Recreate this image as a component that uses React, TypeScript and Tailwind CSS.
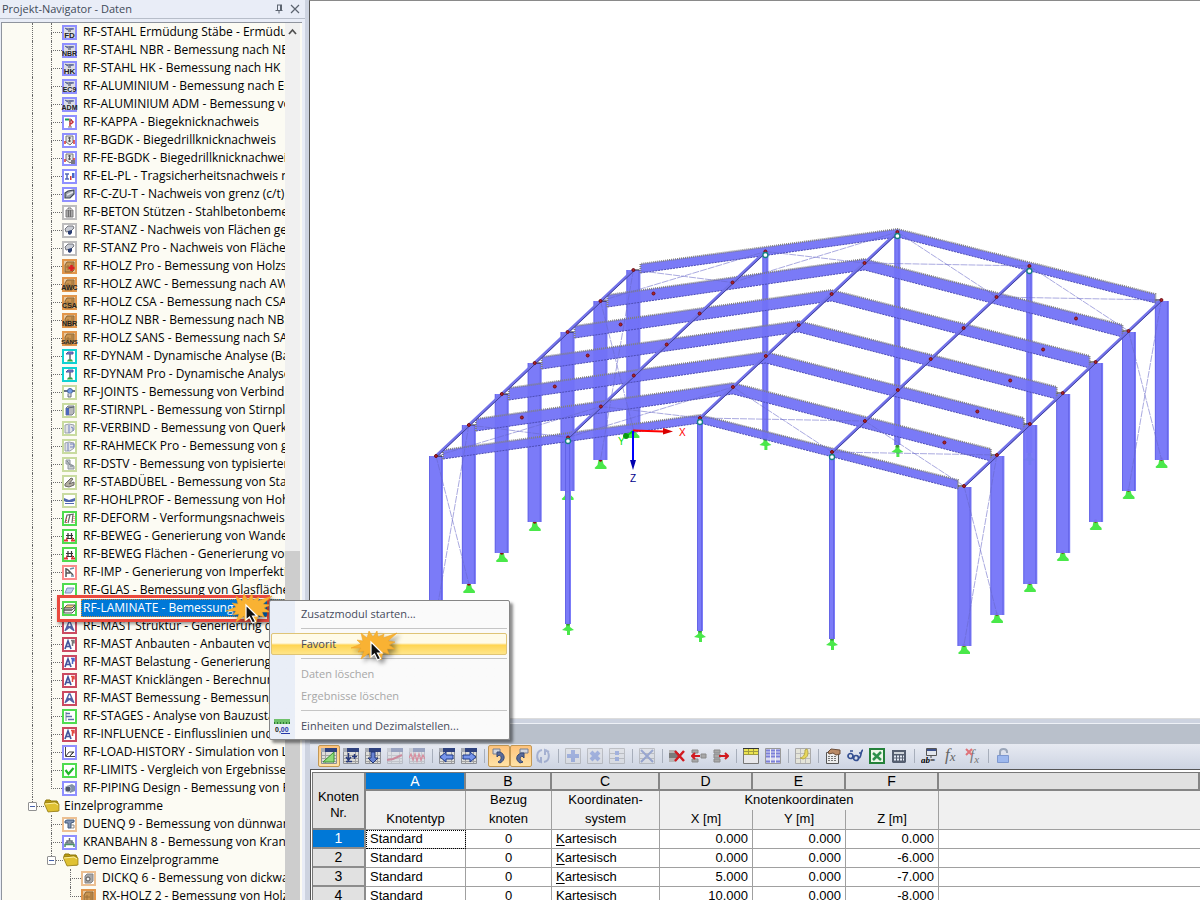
import React, { useState } from 'react';

type Kind =
    | 'label' | 'kappa' | 'bgdk' | 'elpl' | 'channel' | 'beton' | 'stanz' | 'holz' | 'holzPro' | 'dynam'
    | 'joints' | 'plate' | 'verbind' | 'rahmeck' | 'dstv' | 'dowel' | 'hohl' | 'deform' | 'beweg' | 'imp'
    | 'glas' | 'laminate' | 'mast' | 'mastExt' | 'stages' | 'history' | 'limits' | 'piping' | 'duenq' | 'kran' | 'dickq';

interface Module {
    name: string;
    frame: string;
    kind: Kind;
    tag?: string;
}

const BLUE = '#8f90ff';
const GREY = '#bdbdbd';
const WOOD = '#e2964a';
const CYAN = '#10d2d2';
const LIME = '#c9dba0';
const GREEN = '#4fdc4f';
const PINK = '#fb8b8b';
const RED = '#cb4a60';
const SAND = '#ecc092';

const modules: Module[] = [
    { name: 'RF-STAHL Ermüdung Stäbe - Ermüdungsnachweis', frame: BLUE, kind: 'label', tag: 'FD' },
    { name: 'RF-STAHL NBR - Bemessung nach NBR', frame: BLUE, kind: 'label', tag: 'NBR' },
    { name: 'RF-STAHL HK - Bemessung nach HK', frame: BLUE, kind: 'label', tag: 'HK' },
    { name: 'RF-ALUMINIUM - Bemessung nach Eurocode 9', frame: BLUE, kind: 'label', tag: 'EC9' },
    { name: 'RF-ALUMINIUM ADM - Bemessung von Aluminium', frame: BLUE, kind: 'label', tag: 'ADM' },
    { name: 'RF-KAPPA - Biegeknicknachweis', frame: BLUE, kind: 'kappa' },
    { name: 'RF-BGDK - Biegedrillknicknachweis', frame: BLUE, kind: 'bgdk' },
    { name: 'RF-FE-BGDK - Biegedrillknicknachweis', frame: BLUE, kind: 'bgdk', tag: 'Fe' },
    { name: 'RF-EL-PL - Tragsicherheitsnachweis nach EL-PL', frame: BLUE, kind: 'elpl' },
    { name: 'RF-C-ZU-T - Nachweis von grenz (c/t)', frame: BLUE, kind: 'channel' },
    { name: 'RF-BETON Stützen - Stahlbetonbemessung', frame: GREY, kind: 'beton' },
    { name: 'RF-STANZ - Nachweis von Flächen gegen Durchstanzen', frame: GREY, kind: 'stanz' },
    { name: 'RF-STANZ Pro - Nachweis von Flächen', frame: GREY, kind: 'stanz' },
    { name: 'RF-HOLZ Pro - Bemessung von Holzstäben', frame: WOOD, kind: 'holzPro' },
    { name: 'RF-HOLZ AWC - Bemessung nach AWC', frame: WOOD, kind: 'holz', tag: 'AWC' },
    { name: 'RF-HOLZ CSA - Bemessung nach CSA', frame: WOOD, kind: 'holz', tag: 'CSA' },
    { name: 'RF-HOLZ NBR - Bemessung nach NBR', frame: WOOD, kind: 'holz', tag: 'NBR' },
    { name: 'RF-HOLZ SANS - Bemessung nach SANS', frame: WOOD, kind: 'holz', tag: 'SANS' },
    { name: 'RF-DYNAM - Dynamische Analyse (Basis)', frame: CYAN, kind: 'dynam' },
    { name: 'RF-DYNAM Pro - Dynamische Analyse', frame: CYAN, kind: 'dynam' },
    { name: 'RF-JOINTS - Bemessung von Verbindungen', frame: LIME, kind: 'joints' },
    { name: 'RF-STIRNPL - Bemessung von Stirnplatten', frame: LIME, kind: 'plate' },
    { name: 'RF-VERBIND - Bemessung von Querkraft', frame: LIME, kind: 'verbind' },
    { name: 'RF-RAHMECK Pro - Bemessung von geschraubten', frame: LIME, kind: 'rahmeck' },
    { name: 'RF-DSTV - Bemessung von typisierten Verbindungen', frame: LIME, kind: 'dstv' },
    { name: 'RF-STABDÜBEL - Bemessung von Stabdübeln', frame: LIME, kind: 'dowel' },
    { name: 'RF-HOHLPROF - Bemessung von Hohlprofilen', frame: LIME, kind: 'hohl' },
    { name: 'RF-DEFORM - Verformungsnachweis von Stäben', frame: GREEN, kind: 'deform' },
    { name: 'RF-BEWEG - Generierung von Wanderlasten', frame: GREEN, kind: 'beweg' },
    { name: 'RF-BEWEG Flächen - Generierung von Lasten', frame: GREEN, kind: 'beweg' },
    { name: 'RF-IMP - Generierung von Imperfektionen', frame: PINK, kind: 'imp' },
    { name: 'RF-GLAS - Bemessung von Glasflächen', frame: GREEN, kind: 'glas' },
    { name: 'RF-LAMINATE - Bemessung von Laminat', frame: GREEN, kind: 'laminate' },
    { name: 'RF-MAST Struktur - Generierung der Struktur', frame: RED, kind: 'mast' },
    { name: 'RF-MAST Anbauten - Anbauten von Masten', frame: RED, kind: 'mastExt' },
    { name: 'RF-MAST Belastung - Generierung der Last', frame: RED, kind: 'mastExt', tag: 'b' },
    { name: 'RF-MAST Knicklängen - Berechnung', frame: RED, kind: 'mastExt', tag: 'r' },
    { name: 'RF-MAST Bemessung - Bemessung', frame: RED, kind: 'mast' },
    { name: 'RF-STAGES - Analyse von Bauzuständen', frame: GREEN, kind: 'stages' },
    { name: 'RF-INFLUENCE - Einflusslinien und -flächen', frame: RED, kind: 'mastExt', tag: 'r' },
    { name: 'RF-LOAD-HISTORY - Simulation von Lasten', frame: BLUE, kind: 'history' },
    { name: 'RF-LIMITS - Vergleich von Ergebnissen', frame: GREEN, kind: 'limits' },
    { name: 'RF-PIPING Design - Bemessung von Rohren', frame: BLUE, kind: 'piping' },
];

const programs: Module[] = [
    { name: 'DUENQ 9 - Bemessung von dünnwandigen', frame: SAND, kind: 'duenq' },
    { name: 'KRANBAHN 8 - Bemessung von Kranbahnen', frame: BLUE, kind: 'kran' },
];

const demoPrograms: Module[] = [
    { name: 'DICKQ 6 - Bemessung von dickwandigen', frame: SAND, kind: 'dickq' },
    { name: 'RX-HOLZ 2 - Bemessung von Holz', frame: WOOD, kind: 'holz' },
];

const Glyph: React.FC<{ kind: Kind; tag?: string }> = ({ kind, tag }) => {
    switch (kind) {
        case 'label':
            return <g><path d="M2 2h11v11H2z" fill="#dcdde4" /><path d="M3 3h9l-2 2H5zM6 5h3v2H6z" fill="#8a8d98" /><path d="M3 3l3 2M7 4h5" stroke="#4a5aa8" /></g>;
        case 'kappa':
            return <g><path d="M3 4.500h4" stroke="#179b54" strokeWidth="2" /><path d="M8 3.500v8M9 5l2 2-2 2" stroke="#c42d35" strokeWidth="1.500" fill="none" /><path d="M6 12h4M7 7l3-3" stroke="#747474" fill="none" /></g>;
        case 'bgdk':
            return <g><path d="M4 3h7v6l-3 3-4-3z" fill="#e4e4e4" stroke="#777" /><path d="M6 5h3M7.500 4v5M6 8h3" stroke="#555" /><path d="M3 8v3M12 7v4" stroke="#d93030" strokeWidth="1.500" />{tag && <path d="M9 9h4v4H9z" fill="#77777f" />}</g>;
        case 'elpl':
            return <g><path d="M3 5h4M5 5v5M3 10h4" stroke="#5368b9" strokeWidth="1.500" /><path d="M10 4h2.500v5H10z" fill="#4866c9" /><path d="M8 7h1.500v4H8z" fill="#d43c3c" /></g>;
        case 'channel':
            return <g><path d="M3 6l3-2 6-1v4l-4 4-5 0z" fill="#9aa0ac" stroke="#3f4757" strokeWidth="1.200" /><path d="M5 8l6-3" stroke="#e4e6ea" strokeWidth="1.500" /></g>;
        case 'beton':
            return <g><path d="M4 5h7v7H4z" fill="#a9a9a9" stroke="#7c7c7c" /><path d="M6 4V3h3v1M6.500 5v7M8.500 5v7" stroke="#6d6d6d" fill="none" /></g>;
        case 'stanz':
            return <g><path d="M3 6l3-3h5l1 2-3 3-5 1z" fill="#c8ccd4" stroke="#75777d" /><path d="M6 8l4-1v3l-2 2-2-1z" fill="#2b3f72" /></g>;
        case 'holz':
        case 'holzPro':
            return <g><path d="M2 2h11v11H2z" fill="#e8c79c" /><path d="M3 6l2-3h7v8l-2 2H3z" fill="#c99450" stroke="#8d6430" /><path d="M4 8h5M6 6v5M10 4v7" stroke="#9c7038" fill="none" />{kind === 'holzPro' && <path d="M9.500 6v6M6.500 9h6" stroke="#dd1e24" strokeWidth="2.500" />}</g>;
        case 'dynam':
            return <g><path d="M4 5l2-2h5v2H7z" fill="#7c82d1" stroke="#4f559a" /><path d="M8 5v6" stroke="#667" strokeWidth="1.500" /><path d="M5 12.500h6l-1-2H6z" fill="#37a340" /></g>;
        case 'joints':
            return <g><path d="M2 6h11" stroke="#687386" strokeWidth="2" /><circle cx="8" cy="6" r="2.500" fill="#74a0e9" stroke="#46659d" /><path d="M6 8.500v3.500h3V8.500" fill="#ddd" stroke="#67717d" /></g>;
        case 'plate':
            return <g><path d="M4 5l2-2h6v7l-2 2H4z" fill="#b8b9bc" stroke="#777e87" /><path d="M4 5h3v7H4z" fill="#4c68bd" /><path d="M6 5l6-1" stroke="#5b6470" /></g>;
        case 'verbind':
        case 'rahmeck':
            return <g><path d="M3 4l4-1 5 1v5l-4 3H3z" fill="#e0e2e5" stroke="#9aa1a8" /><path d={kind === 'verbind' ? 'M7 4v8M9 6l2 1v3' : 'M6 4v8M8 5h4v3H8'} stroke="#7582c0" fill="none" /></g>;
        case 'dstv':
            return <g><path d="M4 3h4v4l4 2v3H6V7H4z" fill="#c9ced2" stroke="#8e959c" /><path d="M5 4l3 4M8 9h3" stroke="#6f7882" /></g>;
        case 'dowel':
            return <g><path d="M3 9l6-6 2 1-4 5 5-2v3l-5 2-4-1z" fill="#b2aea0" stroke="#696865" /></g>;
        case 'hohl':
            return <g><path d="M2 5l5 2 6-2v3l-3 1H4L2 8z" fill="#5068b0" /><path d="M3 10.500h9" stroke="#5068b0" /></g>;
        case 'deform':
            return <g><path d="M3 12l2-8h3l-2 8M5 4l7-1M11 3l-1 9" stroke="#666" strokeWidth="1.200" fill="none" /><path d="M4.500 12V6M12 5v7" stroke="#f04b4b" strokeDasharray="1 1" fill="none" /></g>;
        case 'beweg':
            return <g><path d="M4 9.500h8M6 4v5M9.500 4v5M4 6.500h7" stroke="#333" strokeWidth="1.200" /><path d="M2 11.500h4M9 11.500h4M4 9.500h1M10 9.500h1" stroke="#e0333b" strokeWidth="2" /></g>;
        case 'imp':
            return <g><path d="M4 3v9M5 4l6 6M4 8h4" stroke="#555" strokeWidth="1.500" /><path d="M8 4l4-1M9 11h3" stroke="#6d8da8" strokeWidth="1.500" /></g>;
        case 'glas':
            return <path d="M5 5h7l-3 5H3z" fill="#bfd0f3" stroke="#7f91bd" />;
        case 'laminate':
            return <g><path d="M5 4h8l-3 3H2z" fill="#f1cf80" stroke="#6d664e" /><path d="M2 7h8l3-3v2l-3 3H2zM2 9h8l3-3v3l-3 3H2z" fill="#eee" stroke="#555" /></g>;
        case 'mast':
            return <path d="M3 12l4-9h1l4 9M5 8.500h5M4 11l5-4M6 7l5 4" stroke="#5261a4" strokeWidth="1.400" fill="none" />;
        case 'mastExt':
            return <g><path d="M3 12l3-8 3 8M4 9.500h4" stroke="#44549c" strokeWidth="1.700" fill="none" /><path d="M9 3.500h3v3M10.500 4v5" stroke={tag === 'r' ? '#e24b42' : tag === 'b' ? '#4b65c6' : '#777'} strokeWidth="1.500" fill="none" /></g>;
        case 'stages':
            return <g><path d="M4 3v9" stroke="#7b859a" /><path d="M4 4.500h4M4 7.500h6M6 10.500h6" stroke="#5f70a8" strokeWidth="1.500" /></g>;
        case 'history':
            return <path d="M3.500 2v9.500H13M4 11l3-4h5l-4 4 3-4" stroke="#444" fill="none" />;
        case 'limits':
            return <path d="M3.500 7l3 4 5-6" stroke="#20b628" strokeWidth="2.200" fill="none" />;
        case 'piping':
            return <g><path d="M5 5l5-2 3 2v5l-5 2z" fill="#8292a8" /><circle cx="6" cy="8" r="3" fill="#4d5666" stroke="#abb6c6" /></g>;
        case 'duenq':
            return <g><path d="M3 4l2-1h7v2l-3 1v5H6V6H3z" fill="#7f92b3" stroke="#445c7b" /><path d="M9 8h3v3H9" stroke="#888" fill="none" /></g>;
        case 'kran':
            return <g><path d="M3 8h9M5 8V6h5v2M7.500 3v3" stroke="#66717d" strokeWidth="1.500" fill="none" /><path d="M3 12V9.500h9V12" stroke="#4d8f68" strokeWidth="1.500" fill="none" /></g>;
        case 'dickq':
            return <g><path d="M4 5l2-2h6v7l-2 2H4z" fill="#a7a7a7" stroke="#858585" /><circle cx="7" cy="8" r="2" fill="#eee" stroke="#555" /></g>;
    }
};

const ModuleIcon: React.FC<{ item: Module }> = ({ item }) => (
    <svg width="15" height="15" viewBox="0 0 15 15" className="shrink-0 overflow-visible" aria-hidden="true">
        <rect x="1" y="1" width="13" height="13" fill="#fff" stroke={item.frame} strokeWidth="2" />
        <Glyph kind={item.kind} tag={item.tag} />
        {(item.kind === 'label' || item.kind === 'holz') && item.tag && (
            <text x="7.500" y="13" textAnchor="middle" fontSize={item.tag.length > 3 ? 6 : item.tag.length > 2 ? 7 : 8} fontWeight="bold" fontFamily="Liberation Sans, sans-serif" fill="#222">{item.tag}</text>
        )}
    </svg>
);

const FolderIcon = () => (
    <svg width="16" height="14" viewBox="0 0 16 14" className="shrink-0" aria-hidden="true">
        <path d="M1 3l1-2h4l1 1h6l1 2v8H4z" fill="#b99b10" stroke="#8e770b" />
        <path d="M0 4l11-1 4 2v7l-11 1z" fill="#dfc133" stroke="#8c7614" strokeWidth=".7" />
        <path d="M1 5l10-1 3 2" stroke="#fff2a0" fill="none" />
    </svg>
);

const Guide = () => <span className="w-[19px] shrink-0 self-stretch border-l border-dotted border-[#6b6b6b]" />;

const ModuleRow: React.FC<{ item: Module; last?: boolean; selected?: boolean; onSelect: () => void; children?: React.ReactNode }> = ({ item, last, selected, onSelect, children }) => (
    <li className="flex h-[18px] items-center">
        {children}
        <span className="flex w-[11px] shrink-0 flex-col self-stretch">
            <span className="h-[10px] border-b border-l border-dotted border-[#6b6b6b]" />
            {!last && <span className="flex-1 border-l border-dotted border-[#6b6b6b]" />}
        </span>
        <span className="pt-px"><ModuleIcon item={item} /></span>
        <button onClick={onSelect} className={`ml-1 flex h-full min-w-0 flex-1 items-center overflow-hidden px-[2px] text-left whitespace-nowrap ${selected ? 'bg-[#0078d7] text-white outline-1 -outline-offset-1 outline-dotted outline-[#e08a30]' : ''}`}>
            {item.name}
        </button>
    </li>
);

const FolderRow: React.FC<{ name: string }> = ({ name }) => (
    <div className="-ml-1 flex h-[18px] items-center">
        <span className="flex w-[9px] shrink-0 flex-col items-center self-stretch">
            <span className="h-[5px] border-l border-dotted border-[#6b6b6b]" />
            <button aria-label={`${name} zuklappen`} className="flex h-[9px] w-[9px] items-center justify-center rounded-[1px] border border-[#919191] bg-white">
                <span className="h-px w-[5px] bg-[#4560a8]" />
            </button>
        </span>
        <span className="w-[7px] border-t border-dotted border-[#6b6b6b]" />
        <FolderIcon />
        <span className="pl-1 whitespace-nowrap">{name}</span>
    </div>
);

const Burst = () => (
    <svg width="52" height="38" viewBox="0 0 52 38" className="drop-shadow-[3px_3px_2px_rgba(0,0,0,0.4)]" aria-hidden="true">
        <path d="M4 20L14 16L10 12L16 13L14 5L20 10L22 3L26 9L30 3L31 9L37 6L36 10L50 5L41 13L48 14L42 17L48 21L40 21L42 26L36 24L34 32L28 26L23 30L22 25L14 31L17 23L11 24L14 20z" fill="#f9b233" stroke="#eda42a" strokeWidth=".6" />
        <path d="M24 14v15l3.500-3 3 6 3-1.500-3-5.500h4.500z" fill="#111" stroke="#fff" strokeWidth="1.200" />
    </svg>
);

const Navigator = () => {
    const [selected, setSelected] = useState('RF-LAMINATE - Bemessung von Laminat');

    return (
        <aside className="flex w-[305px] shrink-0 flex-col bg-[#e9edf7] font-['Open_Sans','Noto_Sans',sans-serif] text-[12px] text-black">
            <header className="flex h-[19px] shrink-0 items-center justify-between border-b border-[#b7bdc9] pr-1 pl-[2px] text-[#3f4a58]">
                <h1 className="text-[11px]">Projekt-Navigator - Daten</h1>
                <div className="flex gap-1">
                    <button aria-label="Anheften">
                        <svg width="12" height="12" viewBox="0 0 12 12"><path d="M4 2h5M4.500 2v5M7.500 2v5M8.500 2v5M2.500 7.500h7M6 7.500v3" stroke="#5c6470" fill="none" /></svg>
                    </button>
                    <button aria-label="Schließen">
                        <svg width="12" height="12" viewBox="0 0 12 12"><path d="M2 2l8 8M10 2l-8 8" stroke="#5c6470" strokeWidth="1.200" /></svg>
                    </button>
                </div>
            </header>
            <div className="mt-[3px] mr-[3px] ml-px flex min-h-0 flex-1 border-t border-l border-[#8f949e] bg-[#fcfbf3]">
                <nav className="min-w-0 flex-1 overflow-hidden pl-[30px]">
                    <ul>
                        {modules.map((m, i) => (
                            <ModuleRow key={m.name} item={m} last={i === modules.length - 1} selected={m.name === selected} onSelect={() => setSelected(m.name)}>
                                <Guide />
                            </ModuleRow>
                        ))}
                    </ul>
                    <FolderRow name="Einzelprogramme" />
                    <ul className="pl-[19px]">
                        {programs.map(m => (
                            <ModuleRow key={m.name} item={m} onSelect={() => setSelected(m.name)} />
                        ))}
                        <li>
                            <FolderRow name="Demo Einzelprogramme" />
                            <ul className="pl-[19px]">
                                {demoPrograms.map((m, i) => (
                                    <ModuleRow key={m.name} item={m} last={i === demoPrograms.length - 1} onSelect={() => setSelected(m.name)} />
                                ))}
                            </ul>
                        </li>
                    </ul>
                </nav>
                <div className="mr-[2px] flex w-[15px] shrink-0 flex-col bg-[#f0f0f0]">
                    <button aria-label="Nach oben" className="flex h-[18px] justify-center pt-[5px]">
                        <svg width="9" height="8" viewBox="0 0 9 8"><path d="M1 6l3.500-4L8 6" stroke="#505050" strokeWidth="1.700" fill="none" /></svg>
                    </button>
                    <div className="flex-[510]" />
                    <div className="flex-[349] bg-[#cdcdcd]" />
                </div>
            </div>
        </aside>
    );
};

const FRAMES = [0, 1, 2, 3, 4, 5, 6];
const DX = 32.9;
const DY = -31;
const at = (x: number, y: number, f: number) => [x + DX * f, y + DY * f] as const;

const Rafter: React.FC<{ f: number }> = ({ f }) => {
    const inner = f > 0 && f < 6;
    const [lx, ly] = at(443, 450, f);
    const [rx, ry] = at(700, inner ? 414 : 415, f);
    const [ex, ey] = at(958, 480, f);
    const end = inner ? 12 : 9;
    const mid = inner ? 11 : 8;
    return (
        <g>
            <path d={`M${lx} ${ly}L${rx} ${ry}L${ex} ${ey}v${end}L${rx} ${ry + mid}L${lx} ${ly + end}z`} fill="#7272f6" fillOpacity=".94" />
            <path d={`M${lx} ${ly + end}L${rx} ${ry + mid}L${ex} ${ey + end}`} fill="none" stroke="#4c4cb4" strokeWidth="1" strokeDasharray="2 1" />
            <path d={`M${lx} ${ly + end}V${ly}L${rx} ${ry}L${ex} ${ey}v${end}`} fill="none" stroke="#80807c" strokeWidth="2" strokeDasharray="1 1" />
            <path d={`M${lx - 6} ${ly + 6}h5M${ex} ${ey + 6}h5`} stroke="#111" strokeWidth="1" />
        </g>
    );
};

const Column: React.FC<{ x: number; top: number; bottom: number; w: number }> = ({ x, top, bottom, w }) => (
    <g>
        <rect x={x - w / 2} y={top} width={w} height={bottom - top} fill="#7676f8" fillOpacity=".96" />
        <path d={`M${x - w / 2 + 0.5} ${top}V${bottom}M${x + w / 2 - 1.5} ${top}V${bottom}`} stroke="#5c5ce0" strokeWidth="1" opacity=".7" />
    </g>
);

const Support: React.FC<{ x: number; y: number; pinned?: boolean }> = ({ x, y, pinned }) => (
    <g fill="#4ae84a">
        <path d={pinned ? `M${x - 2} ${y}h4v3l4 3-4 1v4h-3v-4l-5-1 4-3z` : `M${x - 2} ${y}h4l1 4 3 3v2h-11l-1-1 3-3z`} />
        <circle cx={x} cy={y} r="1.800" fill={pinned ? '#3f8f37' : '#8b1010'} />
    </g>
);

const StructureView = () => {
    const brace = (a: readonly number[], b: readonly number[]) => `M${a[0]} ${a[1]}L${b[0]} ${b[1]}`;
    const roofLine = [[436, 456], [568, 437.5], [700, 418], [832, 452], [964, 486]];
    const bays = [0, 5];
    const braces = bays.flatMap(f => [
        ...roofLine.slice(0, -1).flatMap((p, i) => {
            const q = roofLine[i + 1];
            return [brace(at(p[0], p[1], f), at(q[0], q[1], f + 1)), brace(at(p[0], p[1], f + 1), at(q[0], q[1], f))];
        }),
        ...[roofLine[0], roofLine[4]].flatMap(p => [
            brace(at(p[0], p[1], f), at(p[0], p[1] + 159, f + 1)),
            brace(at(p[0], p[1], f + 1), at(p[0], p[1] + 159, f)),
        ]),
    ]);
    const gable = [[568, 441, 624], [700, 422, 631], [832, 457, 639]];

    return (
        <svg viewBox="310 1 890 717" className="block w-full" role="img" aria-label="3D-Modell einer Halle">
            {gable.map(([x, top, bottom]) => {
                const [bx, bt] = at(x, top, 6);
                return <g key={x}><Support x={bx} y={bottom + DY * 6 + 1} pinned /><Column x={bx} top={bt} bottom={bottom + DY * 6} w={6} /></g>;
            })}
            {[...FRAMES].reverse().map(f => {
                const [lx, ly] = at(436, 456, f);
                const [rx, ry] = at(964, 487, f);
                return (
                    <g key={f}>
                        <Support x={lx} y={ly + 159} />
                        <Column x={lx} top={ly} bottom={ly + 159} w={14} />
                        <Support x={rx} y={ry + 158} />
                        <Column x={rx + 0.5} top={ry} bottom={ry + 159} w={14} />
                    </g>
                );
            })}
            {gable.map(([x, top, bottom]) => (
                <g key={x}><Support x={x} y={bottom} pinned /><Column x={x} top={top} bottom={bottom} w={6} /></g>
            ))}
            {[...FRAMES].reverse().map(f => <Rafter key={f} f={f} />)}
            <path d={braces.join('')} stroke="#6666c8" strokeWidth=".8" strokeDasharray="7 1" fill="none" opacity=".7" />
            {roofLine.map(([x, y]) => {
                const [bx, by] = at(x, y, 6);
                return (
                    <g key={x}>
                        <path d={`M${x} ${y}L${bx} ${by}`} stroke="#7373ea" strokeWidth="3" />
                        <path d={`M${x + 0.5} ${y + 1}L${bx + 0.5} ${by + 1}`} stroke="#41419a" strokeWidth="1" />
                    </g>
                );
            })}
            {FRAMES.map(f => (
                <g key={f} fill="#b02030" stroke="#701010">
                    {roofLine.map(([x, y]) => {
                        const [nx, ny] = at(x, y, f);
                        return <circle key={x} cx={nx} cy={ny} r="1.500" />;
                    })}
                    {f > 0 && f < 6 && [[489, 448.5], [911.5, 473.5]].map(([x, y]) => {
                        const [nx, ny] = at(x, y, f);
                        return <circle key={x} cx={nx} cy={ny} r="1.500" />;
                    })}
                </g>
            ))}
            {[0, 6].map(f => gable.map(([x, top]) => {
                const [nx, ny] = at(x, top, f);
                return <circle key={`${f}-${x}`} cx={nx} cy={ny} r="2.500" fill="#fff" stroke="#128080" strokeWidth="1.300" />;
            }))}
            <path d="M633 430.500l30 1" stroke="#f00" strokeWidth="2" />
            <path d="M663 428l10 3.500-10 3z" fill="#d80000" />
            <path d="M633 431l-5 4" stroke="#00e000" strokeWidth="2" />
            <circle cx="626" cy="436" r="3" fill="#0a9a10" />
            <path d="M633 431v29" stroke="#00f" strokeWidth="2" />
            <path d="M630 460h6l-3 10z" fill="#0000b0" />
            <g fontFamily="Liberation Sans, sans-serif" fontSize="10">
                <text x="679" y="436" fill="#f00">X</text>
                <text x="618" y="445" fill="#0d0">Y</text>
                <text x="630" y="482" fill="#00008c">Z</text>
            </g>
        </svg>
    );
};

const Grid = () => (
    <g>
        <path d="M.5 .5h15v15H.5z" fill="#dededb" stroke="#8c8f96" />
        <path d="M1 7.500h14M1 10.500h14M1 13.500h14M4.500 4v11M12.500 4v11" stroke="#a3a3a3" />
        <path d="M4 0h12v4H4z" fill="#2f427f" /><path d="M0 0h4v4H0z" fill="#a7abb4" />
    </g>
);

const tools: ({ label: string; active?: boolean; dim?: boolean; icon: React.ReactNode } | null)[] = [
    { label: 'Tabelle', active: true, icon: <g><Grid /><path d="M2 14L13 4v10z" fill="#8edc79" stroke="#3d8e32" /></g> },
    { label: 'Zeile einfügen', icon: <g><Grid /><path d="M5.500 5v6M3 9l2.500 3L8 9M3 13.500h6M11.500 6v5M9 8.500h5" stroke="#283a7c" strokeWidth="1.500" fill="none" /></g> },
    { label: 'Nach unten', icon: <g><Grid /><path d="M6 4h4v6h3l-5 5-5-5h3z" fill="#6883d2" stroke="#213575" /></g> },
    { label: 'Diagramm', dim: true, icon: <g><Grid /><path d="M0 12l6-1 9-4" stroke="#b8102e" strokeWidth="2" fill="none" /></g> },
    { label: 'Verlauf', dim: true, icon: <g><Grid /><path d="M0 10l2-4 2 6 2-6 2 7 2-7 2 6 2-5 2 4" stroke="#d21832" strokeWidth="1.300" fill="none" /></g> },
    null,
    { label: 'Vorherige Tabelle', icon: <g><Grid /><path d="M7 4v3h7v4H7v3L1 9z" fill="#7795eb" stroke="#203c8c" /></g> },
    { label: 'Nächste Tabelle', icon: <g><Grid /><path d="M9 4v3H2v4h7v3l6-5z" fill="#7795eb" stroke="#203c8c" /></g> },
    null,
    { label: 'Auswahl übernehmen', active: true, icon: <g><path d="M2 1h7v5H2z" fill="#d3d6dd" stroke="#777f92" /><path d="M9 4c5 2 6 8 0 11l-2-1c4-2 4-6 1-7L6 9V4h3z" fill="#596b9c" stroke="#344875" /></g> },
    { label: 'Auswahl zeigen', active: true, icon: <g><path d="M7 1h8v4H7z" fill="#d3d6dd" stroke="#777f92" /><path d="M8 5c-5 2-6 7-1 10l3-1c-4-2-3-5-1-6l2 2V5z" fill="#596b9c" stroke="#344875" /></g> },
    { label: 'Aktualisieren', dim: true, icon: <g><path d="M7 2C1 3 1 11 5 14M9 14c6-1 6-9 2-12M2 12l4 2V9M14 4l-4-2v5" stroke="#5369aa" strokeWidth="2" fill="none" /></g> },
    null,
    { label: 'Plus', dim: true, icon: <g><path d="M.5 .5h15v15H.5z" fill="#ddd" stroke="#888" /><path d="M8 2v12M2 8h12" stroke="#4869c7" strokeWidth="4" /></g> },
    { label: 'Mal', dim: true, icon: <g><path d="M.5 .5h15v15H.5z" fill="#ddd" stroke="#888" /><path d="M4 4l8 8M12 4l-8 8" stroke="#4869c7" strokeWidth="4" /></g> },
    { label: 'Geteilt', dim: true, icon: <g><path d="M.5 .5h15v15H.5zM.5 5.500h15M.5 10.500h15" fill="#ddd" stroke="#888" /><path d="M8 3v4M8 9v4" stroke="#4869c7" strokeWidth="4" /></g> },
    null,
    { label: 'Löschen', dim: true, icon: <g><path d="M.5 .5h15v15H.5zM.5 5.500h15M.5 10.500h15" fill="#ddd" stroke="#888" /><path d="M2 2l12 12M14 2L2 14" stroke="#344fa6" strokeWidth="2" /></g> },
    null,
    { label: 'Zeile löschen', icon: <g><path d="M0 2h7v12H0z" fill="#b4b4b4" /><path d="M0 5h10v5H0z" fill="#7a7a7a" /><path d="M6 3l9 10M15 3L6 13" stroke="#d11a20" strokeWidth="2.500" /></g> },
    { label: 'Zeile davor', icon: <g><path d="M1 2h6v3H1zM1 11h6v3H1zM10 6h5v4h-5z" fill="#a8a8a8" stroke="#8a8a8a" /><path d="M9 8H1M4 5L1 8l3 3" stroke="#d11a20" strokeWidth="2" fill="none" /></g> },
    { label: 'Zeile danach', icon: <g><path d="M1 2h6v3H1zM1 11h6v3H1zM1 6h6v4H1z" fill="#a8a8a8" stroke="#8a8a8a" /><path d="M6 8h8M12 5l3 3-3 3" stroke="#d11a20" strokeWidth="2" fill="none" /></g> },
    null,
    { label: 'Kopfzeile', icon: <g><path d="M.5 .5h15v15H.5z" fill="#e8e8ec" stroke="#777" /><path d="M1 1h14v6H1z" fill="#ece451" /><path d="M0 .5h16" stroke="#333" /><path d="M1 3.500h14M1 6.500h14M5.500 1v6M10.500 1v6" stroke="#a19c3d" /></g> },
    { label: 'Zeilen einfärben', icon: <g><path d="M.5 .5h15v15H.5z" fill="#dcdcf2" stroke="#999" /><path d="M1 2.500h14M1 5.500h14M1 8.500h14M1 13.500h14" stroke="#7c80d8" strokeWidth="2" /><path d="M5.500 1v14M10.500 1v14" stroke="#f2f2f2" /></g> },
    null,
    { label: 'Filter', icon: <g><path d="M.5 .5h15v15H.5z" fill="#e4e4d9" stroke="#aaa" /><path d="M1 5.500h14M1 10.500h14M5.500 1v14M10.500 1v14" stroke="#bbb" /><path d="M12 1c2 4 1 9-4 10l-3-1c4-1 5-4 5-8z" fill="#e6d65a" stroke="#b5a84b" /></g> },
    null,
    { label: 'Eigenschaften', icon: <g><path d="M1.500 4.500h12v11h-12z" fill="#eee" stroke="#555" /><path d="M3 8.500h9M3 10.500h9M3 12.500h9" stroke="#777" strokeDasharray="2 1" /><path d="M3 4l3-3 9 1v4l-4 1-3-2-4 1z" fill="#ba8a65" stroke="#6c4e39" /></g> },
    { label: 'Ansicht', icon: <g fill="none" stroke="#344f92" strokeWidth="1.700"><circle cx="3.500" cy="8" r="2.500" /><path d="M6 3L3 3M6 8l1 2" /><circle cx="9" cy="10" r="2.500" /><path d="M12 10c3-1 1-7 4-8M12 5h3" /></g> },
    { label: 'Excel', icon: <g><path d="M1 1h14v14H1z" fill="#eef8e9" stroke="#24813a" strokeWidth="2" /><path d="M4 5l8 7M12 4l-8 8" stroke="#2e914b" strokeWidth="2.500" /></g> },
    { label: 'Rechner', icon: <g><path d="M1 2h14v12l-1 1H2l-1-1z" fill="#555e70" /><path d="M3 4h10v2H3z" fill="#ced3d9" /><path d="M3 8.500h10M3 11.500h10" stroke="#e5ebf5" strokeWidth="2" strokeDasharray="2 1" /></g> },
    null,
    { label: 'Formel benennen', icon: <g><path d="M5.500 .5h10v7h-10z" fill="#e1e5eb" stroke="#555" /><path d="M6 1h9v2H6z" fill="#3e518a" /><path d="M10 8v2" stroke="#444" /><text x="0" y="15" fontSize="9" fontWeight="bold" fontStyle="italic" fontFamily="Liberation Serif, serif">ab=</text></g> },
    { label: 'Funktion', icon: <text x="2" y="12" fontSize="17" fontStyle="italic" fontFamily="Liberation Serif, serif" fill="#666">f<tspan fontSize="13" dy="1">x</tspan></text> },
    { label: 'Funktion löschen', icon: <g><text x="5" y="12" fontSize="15" fontStyle="italic" fontFamily="Liberation Serif, serif" fill="#777">f<tspan fontSize="11" dy="3">x</tspan></text><path d="M1 1l6 6M7 1L1 7" stroke="#df7379" strokeWidth="2" /></g> },
    null,
    { label: 'Sperren', icon: <g><path d="M5 8V4c0-4 7-4 7 0v1" fill="none" stroke="#9aa6b9" strokeWidth="2" /><path d="M2.500 7.500h11v7h-11z" fill="#9db8ee" stroke="#7e98cf" /></g> },
];

const Toolbar = () => (
    <div role="toolbar" className="flex h-[25px] shrink-0 items-center overflow-hidden bg-linear-to-b from-[#e7eaf2] to-[#cdd4e2] pb-[2px] pl-2">
        {tools.map((t, i) => t ? (
            <button
                key={i}
                aria-label={t.label}
                className={`flex h-[22px] w-[22px] shrink-0 items-center justify-center rounded-[2px] ${t.active ? 'border border-[#c39854] bg-linear-to-b from-[#ffc37b] to-[#ffe3a6]' : ''} ${t.dim ? 'opacity-40' : ''}`}
            >
                <svg width="16" height="16" viewBox="0 0 16 16" aria-hidden="true" className="shrink-0">{t.icon}</svg>
            </button>
        ) : (
            <span key={i} className="flex w-2 shrink-0 justify-center"><span className="h-[14px] w-px bg-[#a7aebb]" /></span>
        ))}
    </div>
);

const nodes = [
    ['0.000', '0.000', '0.000'],
    ['0.000', '0.000', '-6.000'],
    ['5.000', '0.000', '-7.000'],
    ['10.000', '0.000', '-8.000'],
];

const NodeTable = () => {
    const letter = 'h-[18px] border-r-2 border-b-2 border-[#858585] bg-[#e1e1e1] p-0 font-normal text-[14px] leading-[15px]';
    const head = 'border-[#a0a0a0] bg-[#f0f0f0] p-0 align-top font-normal leading-[17px]';
    const cell = 'h-[19px] border-r border-b border-[#a0a0a0] bg-white px-1 py-0 leading-[18px]';

    return (
        <div className="min-h-0 flex-1 overflow-hidden border-t border-l border-[#555] bg-white pt-[2px] pl-px">
            <table className="w-full table-fixed border-separate border-spacing-0 border-t border-l border-[#777] font-['Liberation_Sans',Arial,sans-serif] text-[13px] text-black">
                <colgroup>
                    <col className="w-[53px]" />
                    <col className="w-[100px]" />
                    <col className="w-[86px]" />
                    <col className="w-[108px]" />
                    <col className="w-[93px]" />
                    <col className="w-[93px]" />
                    <col className="w-[93px]" />
                    <col />
                </colgroup>
                <thead>
                    <tr>
                        <th rowSpan={3} className="border-r-2 border-b-2 border-[#858585] bg-[#e1e1e1] px-0 pt-2 pb-0 text-[13px] leading-4 font-normal">Knoten<br />Nr.</th>
                        <th className={`${letter} bg-[#0078d7]! text-white`}>A</th>
                        {['B', 'C', 'D', 'E', 'F', ''].map(l => <th key={l} className={letter}>{l}</th>)}
                    </tr>
                    <tr>
                        <th className={`${head} h-[19px] border-r`} />
                        <th className={`${head} border-r`}>Bezug</th>
                        <th className={`${head} border-r`}>Koordinaten-</th>
                        <th colSpan={3} className={`${head} border-r`}>Knotenkoordinaten</th>
                        <th className={head} />
                    </tr>
                    <tr>
                        {['Knotentyp', 'knoten', 'system', 'X [m]', 'Y [m]', 'Z [m]', ''].map(l => (
                            <th key={l} className={`${head} h-5 border-b ${l ? 'border-r' : ''}`}>{l}</th>
                        ))}
                    </tr>
                </thead>
                <tbody>
                    {nodes.map((coords, i) => (
                        <tr key={i}>
                            <th scope="row" className={`h-[19px] border-r-2 border-b-2 border-[#8c8c8c] p-0 text-[14px] leading-[17px] font-normal ${i === 0 ? 'bg-[#0078d7] text-white' : 'bg-[#e1e1e1]'}`}>{i + 1}</th>
                            <td className={`${cell} ${i === 0 ? 'outline-1 -outline-offset-1 outline-dotted outline-black' : ''}`}>Standard</td>
                            <td className={`${cell} text-center`}>0</td>
                            <td className={cell}><u className="underline-offset-2">K</u>artesisch</td>
                            {coords.map((c, j) => <td key={j} className={`${cell} text-right`}>{c}</td>)}
                            <td className="border-b border-[#a0a0a0] p-0" />
                        </tr>
                    ))}
                </tbody>
            </table>
        </div>
    );
};

const MenuItem: React.FC<{ label: string; disabled?: boolean; active?: boolean; icon?: React.ReactNode }> = ({ label, disabled, active, icon }) => (
    <button
        role="menuitem"
        disabled={disabled}
        className={`flex h-[22px] w-full items-center text-left ${active ? 'rounded-[2px] border border-[#dfc476] bg-linear-to-b from-[#fffbe8] from-45% via-[#ffd54f] via-55% to-[#ffe588]' : 'border border-transparent'} ${disabled ? 'text-[#a7a7a7]' : 'text-[#464b5c]'}`}
    >
        <span className="flex w-[29px] shrink-0 pl-[2px]">{icon}</span>
        {label}
    </button>
);

const Separator = () => <div className="ml-[30px] h-2 pt-[3px]"><div className="border-t border-[#c5c5c5]" /></div>;

const ContextMenu = () => (
    <div role="menu" className="absolute top-[600px] left-[269px] w-[241px] rounded-[2px] border border-[#868686] bg-linear-to-r from-[#e9eef7] from-[25px] to-[#fafafa] to-[25px] p-[2px] pl-px font-['Open_Sans','Noto_Sans',sans-serif] text-[11px] shadow-[3px_3px_3px_rgba(0,0,0,0.45)]">
        <MenuItem label="Zusatzmodul starten..." />
        <Separator />
        <MenuItem label="Favorit" active />
        <Separator />
        <MenuItem label="Daten löschen" disabled />
        <MenuItem label="Ergebnisse löschen" disabled />
        <Separator />
        <MenuItem
            label="Einheiten und Dezimalstellen..."
            icon={
                <svg width="16" height="16" viewBox="0 0 16 16" aria-hidden="true">
                    <path d="M0 1h16v5H0z" fill="#6fc16b" /><path d="M0 5h16" stroke="#2d7836" strokeDasharray="1 2" strokeWidth="2" />
                    <text x="1" y="14" fontSize="7" fontWeight="bold" fontFamily="Liberation Sans, sans-serif" fill="#222">0,<tspan fill="#2638a8">00</tspan></text>
                    <path d="M7 15.500h9" stroke="#2638a8" />
                </svg>
            }
        />
        <span className="pointer-events-none absolute top-[27px] left-[77px]"><Burst /></span>
    </div>
);

const App: React.FC = () => {
    return (
        <div className="relative flex h-screen overflow-hidden bg-[#cdd3e0]">
            <Navigator />
            <main className="ml-1 flex min-w-0 flex-1 flex-col">
                <section className="min-h-0 flex-1 overflow-hidden border-t border-b border-l border-t-[#8a8a8a] border-b-[#dcdcdc] border-l-[#555] bg-white">
                    <StructureView />
                </section>
                <section className="flex h-[181px] shrink-0 flex-col pl-px">
                    <div className="mt-1 h-px shrink-0 bg-[#eef1f7]" />
                    <div className="h-5 shrink-0 bg-[#b9c0cb]" />
                    <Toolbar />
                    <NodeTable />
                </section>
            </main>
            <div className="pointer-events-none absolute top-[595px] left-[57px] h-[27px] w-[213px] border-3 border-[#ea4a3e] shadow-[1px_2px_3px_rgba(0,0,0,0.4)]" />
            <span className="pointer-events-none absolute top-[591px] left-[222px]"><Burst /></span>
            <ContextMenu />
        </div>
    );
};

export default App;
